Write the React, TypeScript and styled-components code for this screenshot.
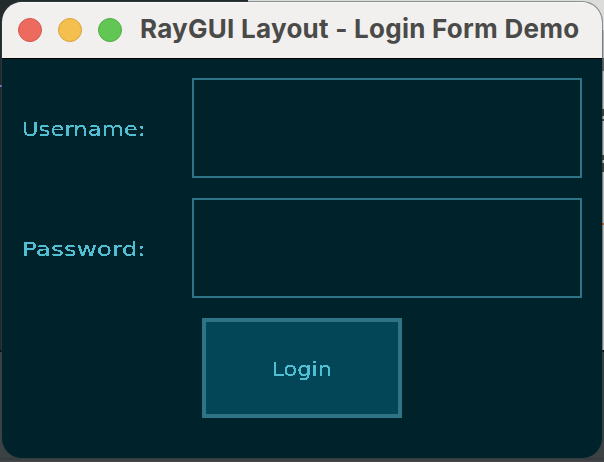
import React from 'react';
import styled, { createGlobalStyle } from 'styled-components';

const GlobalStyle = createGlobalStyle`
  *, *::before, *::after { box-sizing: border-box; }
  html, body { margin: 0; padding: 0; }
  body { overflow: hidden; }
`;

const Desktop = styled.main`
  position: relative;
  width: 604px;
  height: 462px;
  padding: 2px;
  overflow: hidden;
  background:
    linear-gradient(#35383a, #45494b) 0 458px / 604px 4px no-repeat,
    linear-gradient(90deg, #252a2d 248px, #dcdcda 248px) 0 0 / 604px 30px no-repeat,
    linear-gradient(#0b0e10, #0b0e10) 0 350px / 604px 2px no-repeat,
    linear-gradient(#8d74b8, #8d74b8) 0 85px / 2px 2px no-repeat,
    linear-gradient(#c45a20, #c45a20) 602px 223px / 2px 2px no-repeat,
    linear-gradient(#666666, #666666) 602px 58px / 2px 13px no-repeat,
    linear-gradient(#b9b9b9, #b9b9b9) 602px 30px / 2px 320px no-repeat,
    linear-gradient(#22292c 350px, #3c4144 352px) 0 0 / 604px 462px no-repeat;
`;

const EdgeMark = styled.span<{ $top: number; $height: number }>`
  position: absolute;
  left: 602px;
  top: ${(p) => p.$top}px;
  width: 2px;
  height: ${(p) => p.$height}px;
  background: #3c3c3c;
`;

const Window = styled.section`
  display: flex;
  flex-direction: column;
  width: 600px;
  height: 456px;
  border-radius: 20px;
  overflow: hidden;
  background: #00222b;
  box-shadow: 0 0 0 1px rgba(50, 65, 70, 0.5);
`;

const TitleBar = styled.header`
  display: flex;
  align-items: center;
  flex: 0 0 57px;
  padding: 0 0 1px 16px;
  background: #f2f0ef;
  border-bottom: 1px solid #000;
  box-shadow: inset 0 1px #fbfafa;
`;

const TrafficLights = styled.div`
  display: flex;
  gap: 16px;
`;

const Light = styled.span<{ $fill: string; $edge: string }>`
  width: 24px;
  height: 24px;
  border-radius: 50%;
  background: ${(p) => p.$fill};
  border: 1px solid ${(p) => p.$edge};
`;

const Title = styled.h1`
  margin: 0 0 2px 18px;
  font: 700 26px/32px Inter, sans-serif;
  letter-spacing: 0.26px;
  color: #4a4a49;
  white-space: nowrap;
`;

const Form = styled.form`
  display: flex;
  flex-direction: column;
  gap: 20px;
  padding: 19px 20px 0;
`;

const Row = styled.label`
  display: grid;
  grid-template-columns: 170px 390px;
  align-items: center;
  height: 100px;
`;

const PixelText = styled.span<{ $stretch: number; $centered?: boolean }>`
  display: block;
  width: max-content;
  padding-top: 2px;
  font: 400 19px/24px 'DejaVu Sans', sans-serif;
  color: #51bfd3;
  white-space: nowrap;
  transform: scaleX(${(p) => p.$stretch});
  transform-origin: ${(p) => (p.$centered ? 'center' : 'left')};
  filter: url(#hard-edges);
`;

const FilterDefs = styled.svg`
  position: absolute;
  width: 0;
  height: 0;
`;

const Field = styled.input`
  width: 390px;
  height: 100px;
  padding: 0 12px;
  border: 2px solid #2f7486;
  border-radius: 0;
  outline: none;
  background: transparent;
  color: #51bfd3;
`;

const LoginButton = styled.button`
  display: flex;
  align-items: center;
  justify-content: center;
  width: 200px;
  height: 100px;
  margin-left: 180px;
  padding: 0;
  border: 4px solid #2f7486;
  background: #024658;
`;

const fields = [
  { label: 'Username:', type: 'text', stretch: 1.195 },
  { label: 'Password:', type: 'password', stretch: 1.3 },
];

export default function App() {
  return (
    <Desktop>
      <GlobalStyle />
      <FilterDefs aria-hidden="true">
        <filter id="hard-edges" colorInterpolationFilters="sRGB">
          <feComponentTransfer>
            <feFuncA type="discrete" tableValues="0 0 1 1 1" />
          </feComponentTransfer>
        </filter>
      </FilterDefs>
      <EdgeMark $top={109} $height={7} />
      <EdgeMark $top={119} $height={2} />
      <EdgeMark $top={155} $height={5} />
      <EdgeMark $top={163} $height={9} />
      <Window>
        <TitleBar>
          <TrafficLights>
            <Light $fill="#ed6a5f" $edge="#d4574d" />
            <Light $fill="#f5bf4f" $edge="#d9a23d" />
            <Light $fill="#62c654" $edge="#50ad43" />
          </TrafficLights>
          <Title>RayGUI Layout - Login Form Demo</Title>
        </TitleBar>
        <Form onSubmit={(e) => e.preventDefault()}>
          {fields.map((f) => (
            <Row key={f.label}>
              <PixelText $stretch={f.stretch}>{f.label}</PixelText>
              <Field type={f.type} />
            </Row>
          ))}
          <LoginButton type="submit">
            <PixelText $stretch={1.18} $centered>Login</PixelText>
          </LoginButton>
        </Form>
      </Window>
    </Desktop>
  );
}
